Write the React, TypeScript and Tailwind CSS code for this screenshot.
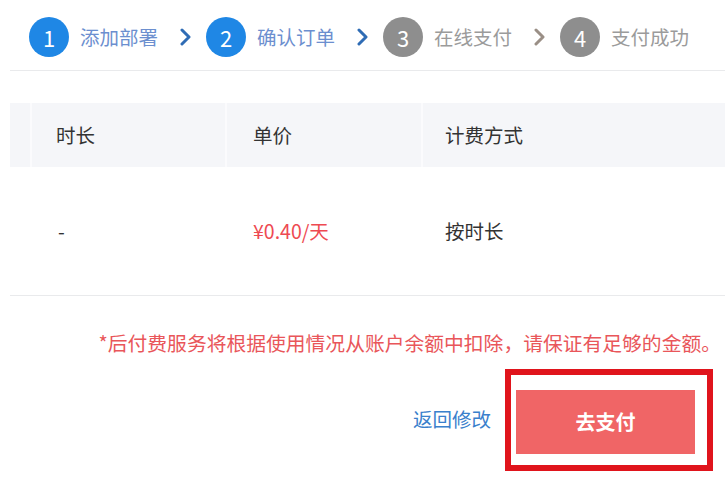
import { Fragment } from "react";

const steps = [
  { n: 1, label: "添加部署", active: true },
  { n: 2, label: "确认订单", active: true },
  { n: 3, label: "在线支付", active: false },
  { n: 4, label: "支付成功", active: false },
];

const font = { fontFamily: '"Noto Sans CJK SC", "Noto Sans", sans-serif' };

function Chevron({ active }: { active: boolean }) {
  return (
    <svg width="11" height="18" viewBox="0 0 11 18" className="mx-[22px] mr-[15px]">
      <polyline
        points="2,2 9,9 2,16"
        fill="none"
        stroke={active ? "#2f6cb5" : "#9a8f86"}
        strokeWidth="3"
        strokeLinecap="round"
        strokeLinejoin="round"
      />
    </svg>
  );
}

export default function App() {
  return (
    <div className="w-[725px] h-[477px] bg-white overflow-hidden pl-[10px]" style={font}>
      {/* steps */}
      <div className="h-[71px] pt-[17px] pl-[19px] border-b border-[#e9eaec] flex items-start">
        {steps.map((s, i) => (
          <Fragment key={s.n}>
            <div className="flex items-center h-[40px]">
              <div
                className={`w-[40px] h-[40px] rounded-full flex items-center justify-center text-white text-[22px] ${
                  s.active ? "bg-[#1f87e5]" : "bg-[#8e8e8e]"
                }`}
              >
                {s.n}
              </div>
              <span
                className={`ml-[11px] text-[19.5px] ${s.active ? "text-[#6c8fcf]" : "text-[#9b9b9b]"}`}
              >
                {s.label}
              </span>
              {i < steps.length - 1 && <Chevron active={s.active && steps[i + 1].active ? true : s.n === 2} />}
            </div>
          </Fragment>
        ))}
      </div>

      {/* table */}
      <div className="mt-[32px]">
        <div className="flex h-[64px] bg-[#f5f6f9] text-[#333] text-[19.5px]">
          <div className="w-[22px] border-r-2 border-[#fbfbfd]" />
          <div className="w-[195px] pl-[24px] flex items-center border-r-2 border-[#fbfbfd]">时长</div>
          <div className="w-[196px] pl-[26px] flex items-center border-r-2 border-[#fbfbfd]">单价</div>
          <div className="flex-1 pl-[22px] flex items-center">计费方式</div>
        </div>
        <div className="flex h-[129px] text-[#333] text-[19.5px] border-b border-[#e9eaec]">
          <div className="w-[22px]" />
          <div className="w-[195px] pl-[26px] flex items-center">-</div>
          <div className="w-[196px] pl-[26px] flex items-center text-[#ee4a52]">¥0.40/天</div>
          <div className="flex-1 pl-[22px] flex items-center">按时长</div>
        </div>
      </div>

      {/* footer */}
      <div className="mt-[33px] pr-[4px] flex justify-end text-[19.8px] leading-[28px] text-[#e9565a]">
        *后付费服务将根据使用情况从账户余额中扣除，请保证有足够的金额。
      </div>
      <div className="mt-[12px] pr-[12px] flex justify-end items-center">
        <button className="mr-[14px] mt-[-2px] text-[19.5px] text-[#3a80cc]">返回修改</button>
        <div className="border-[6px] border-[#e0141c] pl-[5px] pt-[15px] pr-[12px] pb-[11px]">
          <button className="w-[179px] h-[64px] bg-[#f06566] text-white text-[20px] font-bold">去支付</button>
        </div>
      </div>
    </div>
  );
}
